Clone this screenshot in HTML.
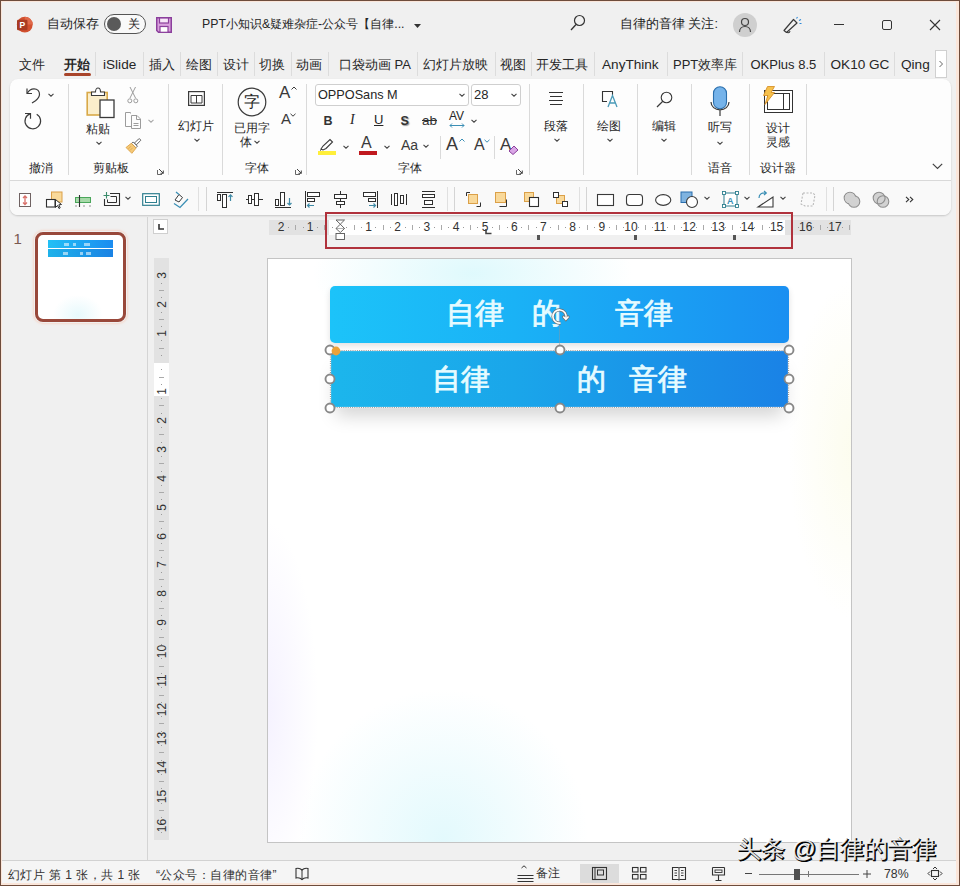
<!DOCTYPE html>
<html><head><meta charset="utf-8">
<style>
*{margin:0;padding:0;box-sizing:border-box}
html,body{width:960px;height:886px;overflow:hidden;background:#f0f0f0;font-family:"Liberation Sans",sans-serif;color:#262626}
.a{position:absolute;white-space:nowrap}
.t13{font-size:13px;line-height:16px}
.t12{font-size:12px;line-height:14px}
.sep{position:absolute;width:1px;background:#d6d6d6}
svg{position:absolute;overflow:visible}
</style></head><body>
<div id="title">
<svg style="left:15px;top:15px" width="19" height="19" viewBox="0 0 19 19"><circle cx="9.8" cy="9.6" r="7.9" fill="#d2502f"/><path d="M9.8 1.7A7.9 7.9 0 0 1 17.7 9.6H9.8Z" fill="#e0694a"/><rect x="2" y="4.8" width="10.5" height="10.5" rx="1.2" fill="#a93a22"/><text x="4.6" y="13.2" font-size="8.5" font-weight="bold" fill="#fff" font-family="Liberation Sans">P</text></svg>
<div class="a t12" style="left:47px;top:17px;font-size:12.5px">自动保存</div>
<div class="a" style="left:104px;top:14px;width:42px;height:20px;border:1.3px solid #555;border-radius:10px;background:#f9f9f9"></div>
<div class="a" style="left:107px;top:17px;width:14px;height:14px;border-radius:7px;background:#5a5a5a"></div>
<div class="a t12" style="left:128px;top:17px">关</div>
<svg style="left:156px;top:17px" width="17" height="17" viewBox="0 0 17 17"><path d="M0.75 0.75H15.25V15.25H2.5L0.75 13.5Z" fill="#d9a0dd" stroke="#8b3f9c" stroke-width="1.5"/><rect x="3.5" y="1" width="9" height="5" fill="#f7e6f8" stroke="#8b3f9c" stroke-width="1.2"/><rect x="4" y="9.5" width="8" height="5.8" fill="#fff" stroke="#8b3f9c" stroke-width="1.2"/></svg>
<div class="a t12" style="left:202px;top:17px;font-size:12.3px">PPT小知识&amp;疑难杂症-公众号【自律...</div>
<svg style="left:414px;top:24px" width="8" height="5"><path d="M0 0H7L3.5 4Z" fill="#333"/></svg>
<svg style="left:570px;top:14px" width="16" height="18" viewBox="0 0 16 18"><circle cx="9.5" cy="6.5" r="5" fill="none" stroke="#333" stroke-width="1.2"/><path d="M6 10.5L1 16" stroke="#333" stroke-width="1.3"/></svg>
<div class="a t12" style="left:620px;top:17px;font-size:12.5px">自律的音律 关注:</div>
<div class="a" style="left:733px;top:13px;width:24px;height:24px;border-radius:12px;background:#cfcfcf"></div>
<svg style="left:738px;top:17px" width="14" height="16" viewBox="0 0 14 16"><circle cx="7" cy="5" r="3.5" fill="none" stroke="#444" stroke-width="1.2"/><path d="M1.5 15c0-3.5 2.5-5.5 5.5-5.5s5.5 2 5.5 5.5" fill="none" stroke="#444" stroke-width="1.2"/></svg>
<svg style="left:782px;top:15px" width="20" height="19" viewBox="0 0 20 19"><path d="M2 15.5L11.5 4.5L15 8L4.5 17.5Z" fill="none" stroke="#3a3a3a" stroke-width="1.2" stroke-linejoin="round"/><path d="M5.5 16.5C5 18 7.5 18.5 8 16" fill="none" stroke="#3a3a3a" stroke-width="1.1"/><path d="M14.5 3.5L15.5 2M17 5.5L19 4.5M17.5 8.5H19.5" stroke="#2b88d8" stroke-width="1.1"/></svg>
<div class="a" style="left:834px;top:24px;width:10px;height:1px;background:#333"></div>
<div class="a" style="left:882px;top:20px;width:10px;height:10px;border:1px solid #333;border-radius:2px"></div>
<svg style="left:929px;top:19px" width="12" height="12"><path d="M1 1L11 11M11 1L1 11" stroke="#333" stroke-width="1.1"/></svg>
</div>

<div id="tabs">
<div class="a t13" style="left:19px;top:57px;">文件</div>
<div class="a t13" style="left:64px;top:57px;font-weight:bold;">开始</div>
<div class="a t13" style="left:103px;top:56.5px;font-size:13.6px">iSlide</div>
<div class="a t13" style="left:149px;top:57px;">插入</div>
<div class="a t13" style="left:186px;top:57px;">绘图</div>
<div class="a t13" style="left:222.5px;top:57px;">设计</div>
<div class="a t13" style="left:259px;top:57px;">切换</div>
<div class="a t13" style="left:296px;top:57px;">动画</div>
<div class="a t13" style="left:339px;top:57px;">口袋动画 PA</div>
<div class="a t13" style="left:423px;top:57px;">幻灯片放映</div>
<div class="a t13" style="left:500px;top:57px;">视图</div>
<div class="a t13" style="left:536px;top:57px;">开发工具</div>
<div class="a t13" style="left:602px;top:56.5px;font-size:13.6px">AnyThink</div>
<div class="a t13" style="left:673px;top:57px;">PPT效率库</div>
<div class="a t13" style="left:750.5px;top:57px;">OKPlus 8.5</div>
<div class="a t13" style="left:830.5px;top:56.5px;font-size:13.6px">OK10 GC</div>
<div class="a t13" style="left:901px;top:56.5px;font-size:13.6px">Qing</div>
<div class="sep" style="left:95px;top:52px;height:24px;background:#dcdcdc"></div>
<div class="sep" style="left:143px;top:52px;height:24px;background:#dcdcdc"></div>
<div class="sep" style="left:180px;top:52px;height:24px;background:#dcdcdc"></div>
<div class="sep" style="left:217px;top:52px;height:24px;background:#dcdcdc"></div>
<div class="sep" style="left:254px;top:52px;height:24px;background:#dcdcdc"></div>
<div class="sep" style="left:291px;top:52px;height:24px;background:#dcdcdc"></div>
<div class="sep" style="left:328px;top:52px;height:24px;background:#dcdcdc"></div>
<div class="sep" style="left:417px;top:52px;height:24px;background:#dcdcdc"></div>
<div class="sep" style="left:495px;top:52px;height:24px;background:#dcdcdc"></div>
<div class="sep" style="left:531px;top:52px;height:24px;background:#dcdcdc"></div>
<div class="sep" style="left:594px;top:52px;height:24px;background:#dcdcdc"></div>
<div class="sep" style="left:667px;top:52px;height:24px;background:#dcdcdc"></div>
<div class="sep" style="left:742px;top:52px;height:24px;background:#dcdcdc"></div>
<div class="sep" style="left:824px;top:52px;height:24px;background:#dcdcdc"></div>
<div class="sep" style="left:894px;top:52px;height:24px;background:#dcdcdc"></div>
<div class="a" style="left:64px;top:73px;width:27px;height:3px;border-radius:1.5px;background:#a8442a"></div>
<div class="a" style="left:935px;top:50px;width:12px;height:28px;background:#fff;border:1px solid #d0d0d0"></div>
<svg style="left:938px;top:60px" width="6" height="8"><path d="M1.5 1L4.5 4L1.5 7" fill="none" stroke="#666" stroke-width="1"/></svg>
</div>

<div class="a" style="left:10px;top:79px;width:941px;height:136px;background:#fdfdfd;border-radius:8px;box-shadow:0 1px 2px rgba(0,0,0,.18)"></div>
<div class="a" style="left:10px;top:181px;width:941px;height:34px;background:#f9f9f9;border-radius:0 0 8px 8px"></div>
<div class="a" style="left:10px;top:180px;width:941px;height:1px;background:#d9d9d9"></div>
<div class="sep" style="left:68px;top:84px;height:91px;background:#dadada"></div>
<div class="sep" style="left:168px;top:84px;height:91px;background:#dadada"></div>
<div class="sep" style="left:222px;top:84px;height:91px;background:#dadada"></div>
<div class="sep" style="left:306px;top:84px;height:91px;background:#dadada"></div>
<div class="sep" style="left:529px;top:84px;height:91px;background:#dadada"></div>
<div class="sep" style="left:583px;top:84px;height:91px;background:#dadada"></div>
<div class="sep" style="left:637px;top:84px;height:91px;background:#dadada"></div>
<div class="sep" style="left:691px;top:84px;height:91px;background:#dadada"></div>
<div class="sep" style="left:749px;top:84px;height:91px;background:#dadada"></div>
<div class="sep" style="left:806px;top:84px;height:91px;background:#dadada"></div>
<svg style="left:24px;top:86px" width="18" height="18" viewBox="0 0 18 18"><path d="M3 2.5V7.5H8" fill="none" stroke="#3a3a3a" stroke-width="1.2"/><path d="M3.3 7.2C5 4 7.5 2.8 10 2.8c3.5 0 5.5 2.6 5.5 5.5 0 3-2 4.8-4 6.5L8 17" fill="none" stroke="#3a3a3a" stroke-width="1.2"/></svg>
<svg style="left:48px;top:93px" width="6" height="4" viewBox="0 0 6 4"><path d="M0.5 0.8L3 3.2L5.5 0.8" fill="none" stroke="#444" stroke-width="1.1"/></svg>
<svg style="left:24px;top:111px" width="18" height="19" viewBox="0 0 18 19"><path d="M1 2.5H6.5V7.8" fill="none" stroke="#3a3a3a" stroke-width="1.2"/><path d="M12.7 3.25A7.8 7.8 0 1 1 6.4 2.6" fill="none" stroke="#3a3a3a" stroke-width="1.2"/></svg>
<div class="a" style="left:29px;top:161px;font-size:12px;line-height:14px;">撤消</div>
<svg style="left:86px;top:87px" width="30" height="32" viewBox="0 0 30 32"><rect x="1.2" y="5.5" width="20" height="22.5" fill="#fbeecb" stroke="#d9a948" stroke-width="1.6"/><path d="M5.5 8.5V5H9.5C9.5 2.5 10.8 1 12 1S14.5 2.5 14.5 5H18.5V8.5Z" fill="#fff" stroke="#3a3a3a" stroke-width="1.1"/><rect x="14" y="13" width="14" height="17.5" fill="#fff" stroke="#3a3a3a" stroke-width="1.3"/></svg>
<div class="a" style="left:86px;top:122px;font-size:12px;line-height:14px;">粘贴</div>
<svg style="left:96px;top:141px" width="6" height="4" viewBox="0 0 6 4"><path d="M0.5 0.8L3 3.2L5.5 0.8" fill="none" stroke="#444" stroke-width="1.1"/></svg>
<svg style="left:120px;top:84px" width="24" height="24" viewBox="0 0 24 24"><g fill="none" stroke="#9c9c9c" stroke-width="1"><path d="M10 3L15.5 14M15.5 3L10 14"/><circle cx="9.8" cy="16.8" r="2"/><circle cx="15.8" cy="16.8" r="2"/></g></svg>
<svg style="left:120px;top:108px" width="24" height="24" viewBox="0 0 24 24"><g fill="none" stroke="#9c9c9c" stroke-width="1"><path d="M10.5 5.5V4.5H5.5V18.5H11"/><path d="M11.5 7.5H17L20.5 11V20.5H11.5Z"/><path d="M16.5 7.5V11.5H20.5M13.5 15.5H18.5M13.5 17.5H18.5"/></g></svg>
<svg style="left:148px;top:119px" width="6" height="4" viewBox="0 0 6 4"><path d="M0.5 0.8L3 3.2L5.5 0.8" fill="none" stroke="#a8a8a8" stroke-width="1.1"/></svg>
<svg style="left:120px;top:134px" width="24" height="24" viewBox="0 0 24 24"><g transform="translate(13.5 11.5) scale(0.75) translate(-12 -12.5)"><g transform="rotate(45 13 12)"><rect x="11.3" y="1" width="3.4" height="9" rx="1" fill="#fff" stroke="#3a3a3a" stroke-width="1"/><rect x="9" y="10" width="8" height="3" fill="#fff" stroke="#3a3a3a" stroke-width="1"/><path d="M8.5 13H17.5L18.5 22H7.5Z" fill="#f5c978" stroke="#d99b3b" stroke-width="1"/><path d="M11 16V21M14 16V21" stroke="#d99b3b" stroke-width="0.8"/></g></g></svg>
<div class="a" style="left:93px;top:161px;font-size:12px;line-height:14px;">剪贴板</div>
<svg style="left:157px;top:167px" width="8" height="8" viewBox="0 0 8 8"><path d="M0.5 3V7.5H5" fill="none" stroke="#555" stroke-width="0.9"/><path d="M2 2L6.3 6.3M3.5 6.3H6.3V3.5" fill="none" stroke="#444" stroke-width="1"/></svg>
<svg style="left:188px;top:91px" width="17" height="15" viewBox="0 0 17 15"><rect x="0.6" y="0.6" width="15.8" height="13.8" fill="none" stroke="#3a3a3a" stroke-width="1.2"/><path d="M3 4.5H14M3 4.5V12H14V4.5M8.5 4.5V12" fill="none" stroke="#3a3a3a" stroke-width="1"/></svg>
<div class="a" style="left:178px;top:119px;font-size:12px;line-height:14px;">幻灯片</div>
<svg style="left:194px;top:138px" width="6" height="4" viewBox="0 0 6 4"><path d="M0.5 0.8L3 3.2L5.5 0.8" fill="none" stroke="#444" stroke-width="1.1"/></svg>
<svg style="left:237px;top:87px" width="30" height="30" viewBox="0 0 30 30"><circle cx="15" cy="15" r="13.8" fill="none" stroke="#3a3a3a" stroke-width="1.2"/></svg>
<div class="a" style="left:244px;top:94px;font-size:16px;line-height:18px;line-height:16px">字</div>
<div class="a" style="left:234px;top:121px;font-size:12px;line-height:14px;">已用字</div>
<div class="a" style="left:240px;top:135px;font-size:12px;line-height:14px;">体</div>
<svg style="left:254px;top:140px" width="6" height="4" viewBox="0 0 6 4"><path d="M0.5 0.8L3 3.2L5.5 0.8" fill="none" stroke="#444" stroke-width="1.1"/></svg>
<div class="a" style="left:279px;top:84px;font-size:17px;line-height:19px;line-height:18px;color:#3a3a3a">A</div>
<svg style="left:291px;top:86px" width="6" height="4" viewBox="0 0 6 4"><path d="M0.5 3.5L3 1L5.5 3.5" fill="none" stroke="#3a3a3a" stroke-width="1"/></svg>
<div class="a" style="left:281px;top:111px;font-size:15px;line-height:17px;line-height:16px;color:#3a3a3a">A</div>
<svg style="left:290px;top:113px" width="6" height="4" viewBox="0 0 6 4"><path d="M0.5 0.8L3 3.2L5.5 0.8" fill="none" stroke="#3a3a3a" stroke-width="1"/></svg>
<div class="a" style="left:245px;top:161px;font-size:12px;line-height:14px;">字体</div>
<svg style="left:295px;top:167px" width="8" height="8" viewBox="0 0 8 8"><path d="M0.5 3V7.5H5" fill="none" stroke="#555" stroke-width="0.9"/><path d="M2 2L6.3 6.3M3.5 6.3H6.3V3.5" fill="none" stroke="#444" stroke-width="1"/></svg>
<div class="a" style="left:315px;top:84px;width:154px;height:22px;border:1px solid #cfcfcf;border-radius:3px;background:#fff"></div>
<div class="a" style="left:318px;top:88px;font-size:13px;line-height:15px;line-height:14px;font-size:12.7px">OPPOSans M</div>
<svg style="left:459px;top:93px" width="6" height="4" viewBox="0 0 6 4"><path d="M0.5 0.8L3 3.2L5.5 0.8" fill="none" stroke="#444" stroke-width="1.1"/></svg>
<div class="a" style="left:471px;top:84px;width:50px;height:22px;border:1px solid #cfcfcf;border-radius:3px;background:#fff"></div>
<div class="a" style="left:474px;top:88px;font-size:13px;line-height:15px;line-height:14px">28</div>
<svg style="left:511px;top:93px" width="6" height="4" viewBox="0 0 6 4"><path d="M0.5 0.8L3 3.2L5.5 0.8" fill="none" stroke="#444" stroke-width="1.1"/></svg>
<div class="a" style="left:323.5px;top:113px;font-size:12.5px;line-height:14.5px;font-weight:bold;line-height:16px;color:#333">B</div>
<div class="a" style="left:350px;top:112px;font-size:14px;line-height:16px;font-family:Liberation Serif;font-style:italic;line-height:16px">I</div>
<div class="a" style="left:374px;top:112px;font-size:13px;line-height:15px;line-height:16px;text-decoration:underline">U</div>
<div class="a" style="left:400.5px;top:113px;font-size:12.5px;line-height:14.5px;font-weight:bold;line-height:16px;color:#333;text-shadow:1px 1px 1px #999">S</div>
<div class="a" style="left:422px;top:113px;font-size:13.5px;line-height:15.5px;line-height:16px;color:#333;text-decoration:line-through">ab</div>
<div class="a" style="left:449px;top:110px;font-size:12px;line-height:14px;line-height:13px">AV</div>
<svg style="left:449px;top:123px" width="16" height="5" viewBox="0 0 16 5"><path d="M1 2.5H15M3 0.5L1 2.5L3 4.5M13 0.5L15 2.5L13 4.5" fill="none" stroke="#3b8fb5" stroke-width="1"/></svg>
<svg style="left:471px;top:119px" width="6" height="4" viewBox="0 0 6 4"><path d="M0.5 0.8L3 3.2L5.5 0.8" fill="none" stroke="#444" stroke-width="1.1"/></svg>
<svg style="left:318px;top:138px" width="18" height="17" viewBox="0 0 18 17"><path d="M3 11L5 8L12 1.5L14.5 4L8 10.5L5 12Z" fill="#fff" stroke="#3a3a3a" stroke-width="1.1"/><path d="M2 12.5L4 11" stroke="#3a3a3a" stroke-width="1"/><rect x="0" y="13" width="18" height="4" fill="#ffef3a"/></svg>
<svg style="left:343px;top:145px" width="6" height="4" viewBox="0 0 6 4"><path d="M0.5 0.8L3 3.2L5.5 0.8" fill="none" stroke="#444" stroke-width="1.1"/></svg>
<div class="a" style="left:361px;top:135px;font-size:16px;line-height:18px;line-height:16px;color:#3a3a3a">A</div>
<div class="a" style="left:359px;top:151px;width:18px;height:4px;background:#c0191f"></div>
<svg style="left:384px;top:145px" width="6" height="4" viewBox="0 0 6 4"><path d="M0.5 0.8L3 3.2L5.5 0.8" fill="none" stroke="#444" stroke-width="1.1"/></svg>
<div class="a" style="left:401px;top:137px;font-size:14px;line-height:16px;line-height:16px;color:#3a3a3a">Aa</div>
<svg style="left:423px;top:144px" width="6" height="4" viewBox="0 0 6 4"><path d="M0.5 0.8L3 3.2L5.5 0.8" fill="none" stroke="#444" stroke-width="1.1"/></svg>
<div class="sep" style="left:440px;top:136px;height:23px;background:#dadada"></div>
<div class="a" style="left:446px;top:135px;font-size:18px;line-height:20px;line-height:18px;color:#3a3a3a">A</div>
<svg style="left:459px;top:138px" width="6" height="4" viewBox="0 0 6 4"><path d="M0.5 3.5L3 1L5.5 3.5" fill="none" stroke="#3b8fb5" stroke-width="1"/></svg>
<div class="a" style="left:474px;top:137px;font-size:16px;line-height:18px;line-height:16px;color:#3a3a3a">A</div>
<svg style="left:484px;top:139px" width="6" height="4" viewBox="0 0 6 4"><path d="M0.5 0.8L3 3.2L5.5 0.8" fill="none" stroke="#3b8fb5" stroke-width="1"/></svg>
<div class="sep" style="left:494px;top:136px;height:23px;background:#dadada"></div>
<div class="a" style="left:500px;top:136px;font-size:17px;line-height:19px;line-height:17px;color:#3a3a3a">A</div>
<svg style="left:508px;top:145px" width="11" height="10" viewBox="0 0 11 10"><path d="M1 6L6 1L10 5L5 9.5Z" fill="#d9a6e6" stroke="#8b3f9c" stroke-width="1"/></svg>
<div class="a" style="left:398px;top:161px;font-size:12px;line-height:14px;">字体</div>
<svg style="left:516px;top:167px" width="8" height="8" viewBox="0 0 8 8"><path d="M0.5 3V7.5H5" fill="none" stroke="#555" stroke-width="0.9"/><path d="M2 2L6.3 6.3M3.5 6.3H6.3V3.5" fill="none" stroke="#444" stroke-width="1"/></svg>
<svg style="left:548px;top:91px" width="16" height="15" viewBox="0 0 16 15"><path d="M1 1.5H15M2 5.5H14M1 9.5H15M2 13.5H14" stroke="#333" stroke-width="1.1"/></svg>
<div class="a" style="left:544px;top:119px;font-size:12px;line-height:14px;">段落</div>
<svg style="left:554px;top:138px" width="6" height="4" viewBox="0 0 6 4"><path d="M0.5 0.8L3 3.2L5.5 0.8" fill="none" stroke="#444" stroke-width="1.1"/></svg>
<svg style="left:601px;top:90px" width="19" height="18" viewBox="0 0 19 18"><path d="M11.5 5V1.5H1.5V11.5H6" fill="none" stroke="#333" stroke-width="1.1"/><path d="M7 17L11.5 5.5L16 17M8.6 13H14.4" fill="none" stroke="#4a9ab8" stroke-width="1.3"/></svg>
<div class="a" style="left:597px;top:119px;font-size:12px;line-height:14px;">绘图</div>
<svg style="left:607px;top:138px" width="6" height="4" viewBox="0 0 6 4"><path d="M0.5 0.8L3 3.2L5.5 0.8" fill="none" stroke="#444" stroke-width="1.1"/></svg>
<svg style="left:656px;top:91px" width="17" height="17" viewBox="0 0 17 17"><circle cx="10.5" cy="6.5" r="5.3" fill="none" stroke="#3a3a3a" stroke-width="1.1"/><path d="M6.8 10.3L1 16" stroke="#3a3a3a" stroke-width="1.2"/></svg>
<div class="a" style="left:652px;top:119px;font-size:12px;line-height:14px;">编辑</div>
<svg style="left:661px;top:138px" width="6" height="4" viewBox="0 0 6 4"><path d="M0.5 0.8L3 3.2L5.5 0.8" fill="none" stroke="#444" stroke-width="1.1"/></svg>
<svg style="left:710px;top:86px" width="20" height="31" viewBox="0 0 20 31"><rect x="3.5" y="0.7" width="13" height="22" rx="6.5" fill="#75b3ea" stroke="#2b6fad" stroke-width="1.1"/><path d="M1 16C1 20.5 5 23.8 10 23.8S19 20.5 19 16M10 24V30" fill="none" stroke="#3a3a3a" stroke-width="1.2"/></svg>
<div class="a" style="left:708px;top:120px;font-size:12px;line-height:14px;">听写</div>
<svg style="left:717px;top:141px" width="6" height="4" viewBox="0 0 6 4"><path d="M0.5 0.8L3 3.2L5.5 0.8" fill="none" stroke="#444" stroke-width="1.1"/></svg>
<div class="a" style="left:708px;top:161px;font-size:12px;line-height:14px;">语音</div>
<svg style="left:761px;top:86px" width="33" height="28" viewBox="0 0 33 28"><rect x="3.5" y="4.5" width="28" height="22" fill="#fff" stroke="#333" stroke-width="1"/><rect x="6.5" y="7.5" width="22" height="16" fill="none" stroke="#333" stroke-width="1"/><path d="M22.5 7.5V23.5" stroke="#333" stroke-width="1"/><path d="M6.5 0.5H13.5L10 6.5H13.5L4 18.5L6.8 9.5H2.5Z" fill="#f6c14c" stroke="#d8922a" stroke-width="0.9"/></svg>
<div class="a" style="left:766px;top:121px;font-size:12px;line-height:14px;">设计</div>
<div class="a" style="left:766px;top:135px;font-size:12px;line-height:14px;">灵感</div>
<div class="a" style="left:760px;top:161px;font-size:12px;line-height:14px;">设计器</div>
<svg style="left:932px;top:163px" width="11" height="7" viewBox="0 0 11 7"><path d="M0.8 0.8L5.5 5.5L10.2 0.8" fill="none" stroke="#444" stroke-width="1.2"/></svg>
<svg style="left:18px;top:192px" width="14" height="16" viewBox="0 0 14 16"><rect x="1.5" y="1.5" width="11" height="13" fill="#fff" stroke="#6f6262" stroke-width="1"/><path d="M7 4V12.5M5 6L7 4L9 6M5 10.5L7 12.5L9 10.5" fill="none" stroke="#d9706a" stroke-width="1.3"/></svg>
<svg style="left:45px;top:191px" width="18" height="18" viewBox="0 0 18 18"><rect x="6.5" y="1" width="10.5" height="10" fill="#f9d99a" stroke="#dba048" stroke-width="1"/><rect x="1.5" y="8.5" width="8.5" height="7.5" fill="#fff" stroke="#2f2f2f" stroke-width="1.1"/><path d="M10.5 8.5V16.5L12.5 14.5L14 17.5L15.2 16.8L13.8 13.8L16.5 13.5Z" fill="#fff" stroke="#2f2f2f" stroke-width="1"/></svg>
<svg style="left:73px;top:193px" width="20" height="16" viewBox="0 0 20 16"><rect x="2.5" y="4.5" width="15" height="5" fill="#a6d9a8" stroke="#4aa65a" stroke-width="1"/><path d="M6.5 2V14" stroke="#2f2f2f" stroke-width="1.1"/><path d="M3 12.5V13.5M11 12.5V13.5M17 12.5V13.5" stroke="#2f2f2f" stroke-width="1"/></svg>
<svg style="left:103px;top:192px" width="19" height="15" viewBox="0 0 19 15"><path d="M7 1.5H16.5V13.5H1.5V7" fill="none" stroke="#2f2f2f" stroke-width="1.1"/><path d="M7.5 4.5H13.5V10.5H4.5V7.5" fill="none" stroke="#2f2f2f" stroke-width="1"/><path d="M3.5 0V6.5M0.5 3.5H6.5" stroke="#3a8a6a" stroke-width="1.1"/></svg>
<svg style="left:125px;top:196px" width="6" height="4" viewBox="0 0 6 4"><path d="M0.5 0.8L3 3.2L5.5 0.8" fill="none" stroke="#444" stroke-width="1.1"/></svg>
<svg style="left:142px;top:193px" width="18" height="13" viewBox="0 0 18 13"><rect x="0.7" y="0.7" width="16.6" height="11.6" fill="#fff" stroke="#2f7f8f" stroke-width="1.2"/><rect x="3.5" y="3.5" width="11" height="6" fill="#fff" stroke="#2f7f8f" stroke-width="1"/></svg>
<svg style="left:172px;top:191px" width="17" height="17" viewBox="0 0 17 17"><path d="M3 9L7 3.5L10.5 6.5L7 11Z" fill="#fff" stroke="#3a3a3a" stroke-width="1"/><path d="M4 1L7 3.5M2 12.5L8 16.5L16 8" fill="none" stroke="#3b8fb5" stroke-width="1.3"/></svg>
<div class="sep" style="left:198px;top:187px;height:24px;background:#e0e0e0"></div>
<div class="sep" style="left:206px;top:187px;height:24px;background:#d4d4d4"></div>
<svg style="left:216px;top:191px" width="18" height="18" viewBox="0 0 18 18"><path d="M1 1.5H17" stroke="#2f2f2f" stroke-width="1"/><rect x="1.5" y="3.5" width="3" height="6" fill="#fff" stroke="#2f2f2f" stroke-width="1"/><rect x="6.5" y="3.5" width="4" height="13" fill="#fff" stroke="#2f2f2f" stroke-width="1"/><path d="M14.5 10V3.8M12.5 5.8L14.5 3.8L16.5 5.8" fill="none" stroke="#3f8aa6" stroke-width="1.2"/></svg>
<svg style="left:246px;top:192px" width="17" height="15" viewBox="0 0 17 15"><path d="M0 7.5H17" stroke="#2f2f2f" stroke-width="1"/><rect x="2.5" y="3.5" width="3" height="8" fill="#fff" stroke="#2f2f2f" stroke-width="1"/><rect x="8.5" y="1.5" width="4" height="12" fill="#fff" stroke="#2f2f2f" stroke-width="1"/></svg>
<svg style="left:275px;top:191px" width="18" height="18" viewBox="0 0 18 18"><path d="M0 16.5H16" stroke="#2f2f2f" stroke-width="1"/><rect x="0.5" y="8.5" width="3" height="6" fill="#fff" stroke="#2f2f2f" stroke-width="1"/><rect x="5.5" y="1.5" width="4" height="13" fill="#fff" stroke="#2f2f2f" stroke-width="1"/><path d="M14.5 7V14M12.5 12L14.5 14L16.5 12" fill="none" stroke="#3f8aa6" stroke-width="1.2"/></svg>
<svg style="left:304px;top:191px" width="17" height="18" viewBox="0 0 17 18"><path d="M1.5 0V17" stroke="#2f2f2f" stroke-width="1"/><rect x="3.5" y="1.5" width="12" height="4" fill="#fff" stroke="#2f2f2f" stroke-width="1"/><rect x="3.5" y="7.5" width="7" height="3" fill="#fff" stroke="#2f2f2f" stroke-width="1"/><path d="M10 14.5H3.5M5.5 12.5L3.5 14.5L5.5 16.5" fill="none" stroke="#3f8aa6" stroke-width="1.2"/></svg>
<svg style="left:333px;top:191px" width="15" height="18" viewBox="0 0 15 18"><path d="M7.5 0V17" stroke="#2f2f2f" stroke-width="1"/><rect x="1.5" y="3.5" width="12" height="4" fill="#fff" stroke="#2f2f2f" stroke-width="1"/><rect x="3.5" y="10.5" width="8" height="3" fill="#fff" stroke="#2f2f2f" stroke-width="1"/></svg>
<svg style="left:362px;top:191px" width="17" height="18" viewBox="0 0 17 18"><path d="M15.5 0V17" stroke="#2f2f2f" stroke-width="1"/><rect x="1.5" y="1.5" width="12" height="4" fill="#fff" stroke="#2f2f2f" stroke-width="1"/><rect x="6.5" y="7.5" width="7" height="3" fill="#fff" stroke="#2f2f2f" stroke-width="1"/><path d="M7 14.5H13.5M11.5 12.5L13.5 14.5L11.5 16.5" fill="none" stroke="#3f8aa6" stroke-width="1.2"/></svg>
<svg style="left:391px;top:192px" width="17" height="15" viewBox="0 0 17 15"><path d="M0.5 2V13M15.5 2V13" stroke="#2f2f2f" stroke-width="1"/><rect x="3.5" y="1.5" width="3" height="12" fill="#fff" stroke="#2f2f2f" stroke-width="1"/><rect x="9.5" y="3.5" width="3" height="8" fill="#fff" stroke="#2f2f2f" stroke-width="1"/></svg>
<svg style="left:421px;top:191px" width="15" height="18" viewBox="0 0 15 18"><path d="M1 0.5H14M1 16.5H14" stroke="#2f2f2f" stroke-width="1"/><rect x="1.5" y="3.5" width="12" height="3" fill="#fff" stroke="#2f2f2f" stroke-width="1"/><rect x="3.5" y="9.5" width="8" height="4" fill="#fff" stroke="#2f2f2f" stroke-width="1"/></svg>
<div class="sep" style="left:447px;top:187px;height:24px;background:#e0e0e0"></div>
<div class="sep" style="left:454px;top:187px;height:24px;background:#d4d4d4"></div>
<svg style="left:465px;top:191px" width="17" height="17" viewBox="0 0 17 17"><path d="M1.5 5V1.5H5M11.5 15.5H15.5V11.5" fill="none" stroke="#2f2f2f" stroke-width="1"/><rect x="3.5" y="3.5" width="9" height="9" fill="#f9d99a" stroke="#dba048" stroke-width="1"/></svg>
<svg style="left:494px;top:191px" width="17" height="17" viewBox="0 0 17 17"><path d="M12.5 8.5V15.5H5.5" fill="none" stroke="#2f2f2f" stroke-width="1"/><rect x="1.5" y="1.5" width="10" height="10" fill="#f9d99a" stroke="#dba048" stroke-width="1"/></svg>
<svg style="left:523px;top:191px" width="17" height="17" viewBox="0 0 17 17"><rect x="1.5" y="1.5" width="9" height="9" fill="#f9d99a" stroke="#dba048" stroke-width="1"/><rect x="6.5" y="6.5" width="9" height="9" fill="#fff" stroke="#2f2f2f" stroke-width="1.1"/></svg>
<svg style="left:552px;top:191px" width="17" height="17" viewBox="0 0 17 17"><rect x="4.5" y="4.5" width="8" height="8" fill="#f9d99a" stroke="#dba048" stroke-width="1"/><rect x="1.5" y="1.5" width="5" height="5" fill="#fff" stroke="#2f2f2f" stroke-width="1"/><rect x="10.5" y="10.5" width="5" height="5" fill="#fff" stroke="#2f2f2f" stroke-width="1"/></svg>
<div class="sep" style="left:579px;top:187px;height:24px;background:#e0e0e0"></div>
<div class="sep" style="left:586px;top:187px;height:24px;background:#d4d4d4"></div>
<svg style="left:597px;top:194px" width="17" height="13" viewBox="0 0 17 13"><rect x="0.5" y="0.5" width="16" height="11" fill="#fff" stroke="#3a3a3a" stroke-width="1.1"/></svg>
<svg style="left:626px;top:194px" width="17" height="13" viewBox="0 0 17 13"><rect x="0.5" y="0.5" width="16" height="11" rx="3" fill="#fff" stroke="#3a3a3a" stroke-width="1.1"/></svg>
<svg style="left:655px;top:194px" width="17" height="12" viewBox="0 0 17 12"><ellipse cx="8.2" cy="6" rx="7.6" ry="5.4" fill="#fff" stroke="#3a3a3a" stroke-width="1.1"/></svg>
<svg style="left:680px;top:191px" width="19" height="17" viewBox="0 0 19 17"><rect x="1" y="1" width="11" height="10.5" fill="#7fb3e0" stroke="#2b6fad" stroke-width="1"/><circle cx="12" cy="11" r="5.5" fill="#fff" stroke="#3a3a3a" stroke-width="1.1"/></svg>
<svg style="left:704px;top:196px" width="6" height="4" viewBox="0 0 6 4"><path d="M0.5 0.8L3 3.2L5.5 0.8" fill="none" stroke="#444" stroke-width="1.1"/></svg>
<svg style="left:722px;top:191px" width="17" height="17" viewBox="0 0 17 17"><rect x="2" y="2" width="13" height="13" fill="#fff" stroke="#2f7f8f" stroke-width="1"/><rect x="0.5" y="0.5" width="3" height="3" fill="#fff" stroke="#2f7f8f" stroke-width="0.9"/><rect x="13.5" y="0.5" width="3" height="3" fill="#fff" stroke="#2f7f8f" stroke-width="0.9"/><rect x="0.5" y="13.5" width="3" height="3" fill="#fff" stroke="#2f7f8f" stroke-width="0.9"/><rect x="13.5" y="13.5" width="3" height="3" fill="#fff" stroke="#2f7f8f" stroke-width="0.9"/><text x="5" y="12.5" font-size="9" font-weight="bold" fill="#3b8fb5" font-family="Liberation Sans">A</text></svg>
<svg style="left:744px;top:196px" width="6" height="4" viewBox="0 0 6 4"><path d="M0.5 0.8L3 3.2L5.5 0.8" fill="none" stroke="#444" stroke-width="1.1"/></svg>
<svg style="left:757px;top:190px" width="17" height="18" viewBox="0 0 17 18"><path d="M1 17L16 7V17Z" fill="#fff" stroke="#3a3a3a" stroke-width="1.1"/><path d="M2 8C2 4 5 2.5 9 3M7 1L9.3 3L7 5" fill="none" stroke="#3b8fb5" stroke-width="1.2"/></svg>
<svg style="left:780px;top:196px" width="6" height="4" viewBox="0 0 6 4"><path d="M0.5 0.8L3 3.2L5.5 0.8" fill="none" stroke="#444" stroke-width="1.1"/></svg>
<svg style="left:800px;top:192px" width="16" height="15" viewBox="0 0 16 15"><path d="M3 1H13L15 3L13 14H5L1 12Z" fill="none" stroke="#b8b8b8" stroke-width="1.1" stroke-dasharray="2 1.5"/></svg>
<div class="sep" style="left:826px;top:187px;height:24px;background:#e0e0e0"></div>
<div class="sep" style="left:833px;top:187px;height:24px;background:#d4d4d4"></div>
<svg style="left:843px;top:191px" width="18" height="18" viewBox="0 0 18 18"><circle cx="7" cy="7" r="5.8" fill="#d2d2d2" stroke="#8f8f8f" stroke-width="1.1"/><circle cx="11" cy="10.5" r="5.8" fill="#d2d2d2" stroke="#8f8f8f" stroke-width="1.1"/><circle cx="7" cy="7" r="5.2" fill="#d2d2d2"/></svg>
<svg style="left:872px;top:191px" width="18" height="18" viewBox="0 0 18 18"><circle cx="7" cy="7" r="5.8" fill="#d2d2d2" stroke="#8f8f8f" stroke-width="1.1"/><circle cx="11" cy="10.5" r="5.8" fill="#d2d2d2" stroke="#8f8f8f" stroke-width="1.1"/><path d="M12.6 4.9A5.8 5.8 0 0 1 5.2 12.5" fill="none" stroke="#8f8f8f" stroke-width="1.1"/></svg>
<svg style="left:905px;top:196px" width="9" height="7" viewBox="0 0 9 7"><path d="M1 0.8L3.8 3.5L1 6.2M5 0.8L7.8 3.5L5 6.2" fill="none" stroke="#333" stroke-width="1.1"/></svg>
<div class="a" style="left:147px;top:217px;width:1px;height:644px;background:#d4d4d4"></div>
<div class="a" style="left:13.5px;top:230px;font-size:15px;line-height:17px;color:#7a5a50">1</div>
<div class="a" style="left:34px;top:231px;width:93px;height:92px;border-radius:9px;box-shadow:0 0 2px 1px rgba(250,200,180,.6)"></div>
<div class="a" style="left:35px;top:232px;width:91px;height:90px;border:3px solid #99483a;border-radius:8px;background:#fff;overflow:hidden"><div class="a" style="left:15px;top:60px;width:50px;height:40px;border-radius:50%;background:radial-gradient(closest-side,rgba(215,245,250,.6),rgba(255,255,255,0))"></div><div class="a" style="left:10px;top:5px;width:65px;height:8px;background:linear-gradient(90deg,#22c0f5,#1b8cf0)"></div><div class="a" style="left:10px;top:14px;width:65px;height:8px;background:linear-gradient(90deg,#1eb2ea,#1a82e4)"></div><div class="a" style="left:26px;top:7.5px;width:5px;height:3px;background:rgba(255,255,255,.55)"></div><div class="a" style="left:35px;top:7.5px;width:3px;height:3px;background:rgba(255,255,255,.55)"></div><div class="a" style="left:46px;top:7.5px;width:6px;height:3px;background:rgba(255,255,255,.55)"></div><div class="a" style="left:25px;top:16.5px;width:5px;height:3px;background:rgba(255,255,255,.55)"></div><div class="a" style="left:42px;top:16.5px;width:3px;height:3px;background:rgba(255,255,255,.55)"></div><div class="a" style="left:48px;top:16.5px;width:5px;height:3px;background:rgba(255,255,255,.55)"></div></div>
<div class="a" style="left:153px;top:219px;width:15px;height:15px;background:#fff;border:1px solid #cfcfcf"></div>
<svg style="left:158px;top:224px" width="6" height="6" viewBox="0 0 6 6"><path d="M1 0V5H6" fill="none" stroke="#333" stroke-width="1.6"/></svg>
<div class="a" style="left:269px;top:220px;width:582px;height:15px;background:#e2e2e2"></div>
<div class="a" style="left:329px;top:220px;width:456px;height:15px;background:#fff"></div>
<div class="a" style="left:271.1px;top:221px;width:20px;text-align:center;font-size:12px;line-height:13px;color:#333">2</div><div class="a" style="left:287.9px;top:227px;width:1px;height:1px;background:#9a9a9a"></div><div class="a" style="left:295.2px;top:225px;width:1px;height:5px;background:#aaa"></div><div class="a" style="left:302.5px;top:227px;width:1px;height:1px;background:#9a9a9a"></div><div class="a" style="left:300.2px;top:221px;width:20px;text-align:center;font-size:12px;line-height:13px;color:#333">1</div><div class="a" style="left:317.0px;top:227px;width:1px;height:1px;background:#9a9a9a"></div><div class="a" style="left:324.3px;top:225px;width:1px;height:5px;background:#aaa"></div><div class="a" style="left:331.6px;top:227px;width:1px;height:1px;background:#9a9a9a"></div><div class="a" style="left:346.2px;top:227px;width:1px;height:1px;background:#9a9a9a"></div><div class="a" style="left:353.5px;top:225px;width:1px;height:5px;background:#aaa"></div><div class="a" style="left:360.8px;top:227px;width:1px;height:1px;background:#9a9a9a"></div><div class="a" style="left:358.5px;top:221px;width:20px;text-align:center;font-size:12px;line-height:13px;color:#333">1</div><div class="a" style="left:375.3px;top:227px;width:1px;height:1px;background:#9a9a9a"></div><div class="a" style="left:382.6px;top:225px;width:1px;height:5px;background:#aaa"></div><div class="a" style="left:389.9px;top:227px;width:1px;height:1px;background:#9a9a9a"></div><div class="a" style="left:387.7px;top:221px;width:20px;text-align:center;font-size:12px;line-height:13px;color:#333">2</div><div class="a" style="left:404.5px;top:227px;width:1px;height:1px;background:#9a9a9a"></div><div class="a" style="left:411.8px;top:225px;width:1px;height:5px;background:#aaa"></div><div class="a" style="left:419.1px;top:227px;width:1px;height:1px;background:#9a9a9a"></div><div class="a" style="left:416.8px;top:221px;width:20px;text-align:center;font-size:12px;line-height:13px;color:#333">3</div><div class="a" style="left:433.6px;top:227px;width:1px;height:1px;background:#9a9a9a"></div><div class="a" style="left:440.9px;top:225px;width:1px;height:5px;background:#aaa"></div><div class="a" style="left:448.2px;top:227px;width:1px;height:1px;background:#9a9a9a"></div><div class="a" style="left:446.0px;top:221px;width:20px;text-align:center;font-size:12px;line-height:13px;color:#333">4</div><div class="a" style="left:462.8px;top:227px;width:1px;height:1px;background:#9a9a9a"></div><div class="a" style="left:470.1px;top:225px;width:1px;height:5px;background:#aaa"></div><div class="a" style="left:477.4px;top:227px;width:1px;height:1px;background:#9a9a9a"></div><div class="a" style="left:475.1px;top:221px;width:20px;text-align:center;font-size:12px;line-height:13px;color:#333">5</div><div class="a" style="left:491.9px;top:227px;width:1px;height:1px;background:#9a9a9a"></div><div class="a" style="left:499.2px;top:225px;width:1px;height:5px;background:#aaa"></div><div class="a" style="left:506.5px;top:227px;width:1px;height:1px;background:#9a9a9a"></div><div class="a" style="left:504.3px;top:221px;width:20px;text-align:center;font-size:12px;line-height:13px;color:#333">6</div><div class="a" style="left:521.1px;top:227px;width:1px;height:1px;background:#9a9a9a"></div><div class="a" style="left:528.4px;top:225px;width:1px;height:5px;background:#aaa"></div><div class="a" style="left:535.7px;top:227px;width:1px;height:1px;background:#9a9a9a"></div><div class="a" style="left:533.4px;top:221px;width:20px;text-align:center;font-size:12px;line-height:13px;color:#333">7</div><div class="a" style="left:550.2px;top:227px;width:1px;height:1px;background:#9a9a9a"></div><div class="a" style="left:557.5px;top:225px;width:1px;height:5px;background:#aaa"></div><div class="a" style="left:564.8px;top:227px;width:1px;height:1px;background:#9a9a9a"></div><div class="a" style="left:562.6px;top:221px;width:20px;text-align:center;font-size:12px;line-height:13px;color:#333">8</div><div class="a" style="left:579.4px;top:227px;width:1px;height:1px;background:#9a9a9a"></div><div class="a" style="left:586.7px;top:225px;width:1px;height:5px;background:#aaa"></div><div class="a" style="left:594.0px;top:227px;width:1px;height:1px;background:#9a9a9a"></div><div class="a" style="left:591.8px;top:221px;width:20px;text-align:center;font-size:12px;line-height:13px;color:#333">9</div><div class="a" style="left:608.5px;top:227px;width:1px;height:1px;background:#9a9a9a"></div><div class="a" style="left:615.8px;top:225px;width:1px;height:5px;background:#aaa"></div><div class="a" style="left:623.1px;top:227px;width:1px;height:1px;background:#9a9a9a"></div><div class="a" style="left:620.9px;top:221px;width:20px;text-align:center;font-size:12px;line-height:13px;color:#333">10</div><div class="a" style="left:637.7px;top:227px;width:1px;height:1px;background:#9a9a9a"></div><div class="a" style="left:645.0px;top:225px;width:1px;height:5px;background:#aaa"></div><div class="a" style="left:652.3px;top:227px;width:1px;height:1px;background:#9a9a9a"></div><div class="a" style="left:650.0px;top:221px;width:20px;text-align:center;font-size:12px;line-height:13px;color:#333">11</div><div class="a" style="left:666.8px;top:227px;width:1px;height:1px;background:#9a9a9a"></div><div class="a" style="left:674.1px;top:225px;width:1px;height:5px;background:#aaa"></div><div class="a" style="left:681.4px;top:227px;width:1px;height:1px;background:#9a9a9a"></div><div class="a" style="left:679.2px;top:221px;width:20px;text-align:center;font-size:12px;line-height:13px;color:#333">12</div><div class="a" style="left:696.0px;top:227px;width:1px;height:1px;background:#9a9a9a"></div><div class="a" style="left:703.3px;top:225px;width:1px;height:5px;background:#aaa"></div><div class="a" style="left:710.6px;top:227px;width:1px;height:1px;background:#9a9a9a"></div><div class="a" style="left:708.3px;top:221px;width:20px;text-align:center;font-size:12px;line-height:13px;color:#333">13</div><div class="a" style="left:725.1px;top:227px;width:1px;height:1px;background:#9a9a9a"></div><div class="a" style="left:732.4px;top:225px;width:1px;height:5px;background:#aaa"></div><div class="a" style="left:739.7px;top:227px;width:1px;height:1px;background:#9a9a9a"></div><div class="a" style="left:737.5px;top:221px;width:20px;text-align:center;font-size:12px;line-height:13px;color:#333">14</div><div class="a" style="left:754.3px;top:227px;width:1px;height:1px;background:#9a9a9a"></div><div class="a" style="left:761.6px;top:225px;width:1px;height:5px;background:#aaa"></div><div class="a" style="left:768.9px;top:227px;width:1px;height:1px;background:#9a9a9a"></div><div class="a" style="left:766.6px;top:221px;width:20px;text-align:center;font-size:12px;line-height:13px;color:#333">15</div><div class="a" style="left:783.4px;top:227px;width:1px;height:1px;background:#9a9a9a"></div><div class="a" style="left:790.7px;top:225px;width:1px;height:5px;background:#aaa"></div><div class="a" style="left:798.0px;top:227px;width:1px;height:1px;background:#9a9a9a"></div><div class="a" style="left:795.8px;top:221px;width:20px;text-align:center;font-size:12px;line-height:13px;color:#333">16</div><div class="a" style="left:812.6px;top:227px;width:1px;height:1px;background:#9a9a9a"></div><div class="a" style="left:819.9px;top:225px;width:1px;height:5px;background:#aaa"></div><div class="a" style="left:827.2px;top:227px;width:1px;height:1px;background:#9a9a9a"></div><div class="a" style="left:824.9px;top:221px;width:20px;text-align:center;font-size:12px;line-height:13px;color:#333">17</div><div class="a" style="left:841.7px;top:227px;width:1px;height:1px;background:#9a9a9a"></div><div class="a" style="left:849.0px;top:225px;width:1px;height:5px;background:#aaa"></div>
<svg style="left:335px;top:219px" width="11" height="22" viewBox="0 0 11 22"><path d="M1 1H9.5L5.3 5.2L9.5 9.5H1L5.3 5.2Z" fill="#fff" stroke="#555" stroke-width="0.9"/><path d="M1 9.5L5.3 13.5L9.5 9.5" fill="#fff" stroke="#555" stroke-width="0.9"/><rect x="1" y="14.5" width="8.5" height="6" fill="#fff" stroke="#555" stroke-width="0.9"/></svg>
<svg style="left:485px;top:229px" width="7" height="6" viewBox="0 0 7 6"><path d="M1 0V4.5H6.5" fill="none" stroke="#444" stroke-width="1.6"/></svg>
<div class="a" style="left:536.5px;top:235px;width:3px;height:5px;background:#555"></div>
<div class="a" style="left:634px;top:235px;width:3px;height:5px;background:#555"></div>
<div class="a" style="left:733px;top:235px;width:3px;height:5px;background:#555"></div>
<div class="a" style="left:154px;top:258px;width:15px;height:582px;background:#e2e2e2"></div>
<div class="a" style="left:154px;top:363px;width:15px;height:33px;background:#fff"></div>
<div class="a" style="left:151.5px;top:269.4px;width:20px;height:13px;text-align:center;font-size:12px;line-height:13px;color:#333;transform:rotate(-90deg)">3</div><div class="a" style="left:161px;top:282.6px;width:1px;height:1px;background:#9a9a9a"></div><div class="a" style="left:159px;top:289.9px;width:5px;height:1px;background:#aaa"></div><div class="a" style="left:161px;top:297.1px;width:1px;height:1px;background:#9a9a9a"></div><div class="a" style="left:151.5px;top:298.3px;width:20px;height:13px;text-align:center;font-size:12px;line-height:13px;color:#333;transform:rotate(-90deg)">2</div><div class="a" style="left:161px;top:311.5px;width:1px;height:1px;background:#9a9a9a"></div><div class="a" style="left:159px;top:318.8px;width:5px;height:1px;background:#aaa"></div><div class="a" style="left:161px;top:326.0px;width:1px;height:1px;background:#9a9a9a"></div><div class="a" style="left:151.5px;top:327.2px;width:20px;height:13px;text-align:center;font-size:12px;line-height:13px;color:#333;transform:rotate(-90deg)">1</div><div class="a" style="left:161px;top:340.4px;width:1px;height:1px;background:#9a9a9a"></div><div class="a" style="left:159px;top:347.7px;width:5px;height:1px;background:#aaa"></div><div class="a" style="left:161px;top:354.9px;width:1px;height:1px;background:#9a9a9a"></div><div class="a" style="left:161px;top:369.3px;width:1px;height:1px;background:#9a9a9a"></div><div class="a" style="left:159px;top:376.6px;width:5px;height:1px;background:#aaa"></div><div class="a" style="left:161px;top:383.8px;width:1px;height:1px;background:#9a9a9a"></div><div class="a" style="left:151.5px;top:385.0px;width:20px;height:13px;text-align:center;font-size:12px;line-height:13px;color:#333;transform:rotate(-90deg)">1</div><div class="a" style="left:161px;top:398.2px;width:1px;height:1px;background:#9a9a9a"></div><div class="a" style="left:159px;top:405.4px;width:5px;height:1px;background:#aaa"></div><div class="a" style="left:161px;top:412.7px;width:1px;height:1px;background:#9a9a9a"></div><div class="a" style="left:151.5px;top:413.9px;width:20px;height:13px;text-align:center;font-size:12px;line-height:13px;color:#333;transform:rotate(-90deg)">2</div><div class="a" style="left:161px;top:427.1px;width:1px;height:1px;background:#9a9a9a"></div><div class="a" style="left:159px;top:434.4px;width:5px;height:1px;background:#aaa"></div><div class="a" style="left:161px;top:441.6px;width:1px;height:1px;background:#9a9a9a"></div><div class="a" style="left:151.5px;top:442.8px;width:20px;height:13px;text-align:center;font-size:12px;line-height:13px;color:#333;transform:rotate(-90deg)">3</div><div class="a" style="left:161px;top:456.0px;width:1px;height:1px;background:#9a9a9a"></div><div class="a" style="left:159px;top:463.2px;width:5px;height:1px;background:#aaa"></div><div class="a" style="left:161px;top:470.5px;width:1px;height:1px;background:#9a9a9a"></div><div class="a" style="left:151.5px;top:471.7px;width:20px;height:13px;text-align:center;font-size:12px;line-height:13px;color:#333;transform:rotate(-90deg)">4</div><div class="a" style="left:161px;top:484.9px;width:1px;height:1px;background:#9a9a9a"></div><div class="a" style="left:159px;top:492.2px;width:5px;height:1px;background:#aaa"></div><div class="a" style="left:161px;top:499.4px;width:1px;height:1px;background:#9a9a9a"></div><div class="a" style="left:151.5px;top:500.6px;width:20px;height:13px;text-align:center;font-size:12px;line-height:13px;color:#333;transform:rotate(-90deg)">5</div><div class="a" style="left:161px;top:513.8px;width:1px;height:1px;background:#9a9a9a"></div><div class="a" style="left:159px;top:521.1px;width:5px;height:1px;background:#aaa"></div><div class="a" style="left:161px;top:528.3px;width:1px;height:1px;background:#9a9a9a"></div><div class="a" style="left:151.5px;top:529.5px;width:20px;height:13px;text-align:center;font-size:12px;line-height:13px;color:#333;transform:rotate(-90deg)">6</div><div class="a" style="left:161px;top:542.7px;width:1px;height:1px;background:#9a9a9a"></div><div class="a" style="left:159px;top:550.0px;width:5px;height:1px;background:#aaa"></div><div class="a" style="left:161px;top:557.2px;width:1px;height:1px;background:#9a9a9a"></div><div class="a" style="left:151.5px;top:558.4px;width:20px;height:13px;text-align:center;font-size:12px;line-height:13px;color:#333;transform:rotate(-90deg)">7</div><div class="a" style="left:161px;top:571.6px;width:1px;height:1px;background:#9a9a9a"></div><div class="a" style="left:159px;top:578.9px;width:5px;height:1px;background:#aaa"></div><div class="a" style="left:161px;top:586.1px;width:1px;height:1px;background:#9a9a9a"></div><div class="a" style="left:151.5px;top:587.3px;width:20px;height:13px;text-align:center;font-size:12px;line-height:13px;color:#333;transform:rotate(-90deg)">8</div><div class="a" style="left:161px;top:600.5px;width:1px;height:1px;background:#9a9a9a"></div><div class="a" style="left:159px;top:607.8px;width:5px;height:1px;background:#aaa"></div><div class="a" style="left:161px;top:615.0px;width:1px;height:1px;background:#9a9a9a"></div><div class="a" style="left:151.5px;top:616.2px;width:20px;height:13px;text-align:center;font-size:12px;line-height:13px;color:#333;transform:rotate(-90deg)">9</div><div class="a" style="left:161px;top:629.4px;width:1px;height:1px;background:#9a9a9a"></div><div class="a" style="left:159px;top:636.7px;width:5px;height:1px;background:#aaa"></div><div class="a" style="left:161px;top:643.9px;width:1px;height:1px;background:#9a9a9a"></div><div class="a" style="left:151.5px;top:645.1px;width:20px;height:13px;text-align:center;font-size:12px;line-height:13px;color:#333;transform:rotate(-90deg)">10</div><div class="a" style="left:161px;top:658.3px;width:1px;height:1px;background:#9a9a9a"></div><div class="a" style="left:159px;top:665.6px;width:5px;height:1px;background:#aaa"></div><div class="a" style="left:161px;top:672.8px;width:1px;height:1px;background:#9a9a9a"></div><div class="a" style="left:151.5px;top:674.0px;width:20px;height:13px;text-align:center;font-size:12px;line-height:13px;color:#333;transform:rotate(-90deg)">11</div><div class="a" style="left:161px;top:687.2px;width:1px;height:1px;background:#9a9a9a"></div><div class="a" style="left:159px;top:694.5px;width:5px;height:1px;background:#aaa"></div><div class="a" style="left:161px;top:701.7px;width:1px;height:1px;background:#9a9a9a"></div><div class="a" style="left:151.5px;top:702.9px;width:20px;height:13px;text-align:center;font-size:12px;line-height:13px;color:#333;transform:rotate(-90deg)">12</div><div class="a" style="left:161px;top:716.1px;width:1px;height:1px;background:#9a9a9a"></div><div class="a" style="left:159px;top:723.4px;width:5px;height:1px;background:#aaa"></div><div class="a" style="left:161px;top:730.6px;width:1px;height:1px;background:#9a9a9a"></div><div class="a" style="left:151.5px;top:731.8px;width:20px;height:13px;text-align:center;font-size:12px;line-height:13px;color:#333;transform:rotate(-90deg)">13</div><div class="a" style="left:161px;top:745.0px;width:1px;height:1px;background:#9a9a9a"></div><div class="a" style="left:159px;top:752.2px;width:5px;height:1px;background:#aaa"></div><div class="a" style="left:161px;top:759.5px;width:1px;height:1px;background:#9a9a9a"></div><div class="a" style="left:151.5px;top:760.7px;width:20px;height:13px;text-align:center;font-size:12px;line-height:13px;color:#333;transform:rotate(-90deg)">14</div><div class="a" style="left:161px;top:773.9px;width:1px;height:1px;background:#9a9a9a"></div><div class="a" style="left:159px;top:781.2px;width:5px;height:1px;background:#aaa"></div><div class="a" style="left:161px;top:788.4px;width:1px;height:1px;background:#9a9a9a"></div><div class="a" style="left:151.5px;top:789.6px;width:20px;height:13px;text-align:center;font-size:12px;line-height:13px;color:#333;transform:rotate(-90deg)">15</div><div class="a" style="left:161px;top:802.8px;width:1px;height:1px;background:#9a9a9a"></div><div class="a" style="left:159px;top:810.1px;width:5px;height:1px;background:#aaa"></div><div class="a" style="left:161px;top:817.3px;width:1px;height:1px;background:#9a9a9a"></div><div class="a" style="left:151.5px;top:818.5px;width:20px;height:13px;text-align:center;font-size:12px;line-height:13px;color:#333;transform:rotate(-90deg)">16</div><div class="a" style="left:161px;top:831.7px;width:1px;height:1px;background:#9a9a9a"></div>
<div class="a" style="left:325px;top:212px;width:468px;height:37px;border:2.5px solid #b0323c"></div>
<div class="a" style="left:267px;top:258px;width:585px;height:585px;background:#fff;border:1px solid #c4c4c4;overflow:hidden"><div class="a" style="left:45px;top:-60px;width:320px;height:150px;border-radius:50%;background:radial-gradient(closest-side,rgba(215,248,252,.8),rgba(255,255,255,0))"></div><div class="a" style="left:30px;top:430px;width:290px;height:300px;border-radius:50%;background:radial-gradient(closest-side,rgba(215,247,252,.7),rgba(255,255,255,0))"></div><div class="a" style="left:-60px;top:260px;width:110px;height:380px;border-radius:50%;background:radial-gradient(closest-side,rgba(242,238,255,.8),rgba(255,255,255,0))"></div><div class="a" style="left:520px;top:20px;width:130px;height:340px;border-radius:50%;background:radial-gradient(closest-side,rgba(252,252,235,.85),rgba(255,255,255,0))"></div></div>
<div class="a" style="left:330px;top:286px;width:459px;height:57px;border-radius:5px;background:linear-gradient(90deg,#1cc3f9 0%,#1ab2f6 40%,#1a8ff1 100%);box-shadow:0 3px 6px rgba(0,0,0,.12)"></div>
<div class="a" style="left:446px;top:296.8px;font-size:29px;line-height:32px;color:#e6fbff;-webkit-text-stroke:0.8px #e6fbff;letter-spacing:0">自律</div>
<div class="a" style="left:531.5px;top:296.8px;font-size:29px;line-height:32px;color:#e6fbff;-webkit-text-stroke:0.8px #e6fbff">的</div>
<div class="a" style="left:614.5px;top:296.8px;font-size:29px;line-height:32px;color:#e6fbff;-webkit-text-stroke:0.8px #e6fbff">音律</div>
<div class="a" style="left:330px;top:350px;width:459px;height:58px;background:linear-gradient(90deg,#1cb6ec 0%,#1aa6ea 40%,#1a82e6 100%);box-shadow:0 14px 18px -6px rgba(0,0,0,.17)"></div>
<div class="a" style="left:431.5px;top:363px;font-size:29px;line-height:32px;color:#e6fbff;-webkit-text-stroke:0.8px #e6fbff">自律</div>
<div class="a" style="left:577px;top:363px;font-size:29px;line-height:32px;color:#e6fbff;-webkit-text-stroke:0.8px #e6fbff">的</div>
<div class="a" style="left:628.5px;top:363px;font-size:29px;line-height:32px;color:#e6fbff;-webkit-text-stroke:0.8px #e6fbff">音律</div>
<svg style="left:330px;top:350px" width="459" height="58" viewBox="0 0 459 58"><rect x="0.5" y="0.5" width="458" height="57" fill="none" stroke="#fff" stroke-width="1.2"/><rect x="0.5" y="0.5" width="458" height="57" fill="none" stroke="#9a9a9a" stroke-width="1.2" stroke-dasharray="1 1.2"/></svg>
<div class="a" style="left:559px;top:326px;width:1px;height:20px;background:rgba(140,150,160,.45)"></div>
<svg style="left:550px;top:307px" width="20" height="20" viewBox="0 0 20 20"><path d="M15.88 11.21A6.6 6.6 0 1 0 10.65 16.00" fill="none" stroke="#707070" stroke-width="3.1"/><path d="M13.68 10.01L15.88 12.41L18.08 10.01" fill="none" stroke="#707070" stroke-width="3.1" stroke-linecap="round"/><path d="M15.88 11.21A6.6 6.6 0 1 0 10.65 16.00" fill="none" stroke="#fff" stroke-width="1.6"/><path d="M13.68 10.01L15.88 12.41L18.08 10.01" fill="none" stroke="#fff" stroke-width="1.6" stroke-linecap="round"/></svg>
<svg style="left:324px;top:344px" width="12" height="12" viewBox="0 0 12 12"><circle cx="6" cy="6" r="4.5" fill="#fff" stroke="#888" stroke-width="1.9"/></svg>
<svg style="left:553.5px;top:344px" width="12" height="12" viewBox="0 0 12 12"><circle cx="6" cy="6" r="4.5" fill="#fff" stroke="#888" stroke-width="1.9"/></svg>
<svg style="left:783px;top:344px" width="12" height="12" viewBox="0 0 12 12"><circle cx="6" cy="6" r="4.5" fill="#fff" stroke="#888" stroke-width="1.9"/></svg>
<svg style="left:324px;top:373px" width="12" height="12" viewBox="0 0 12 12"><circle cx="6" cy="6" r="4.5" fill="#fff" stroke="#888" stroke-width="1.9"/></svg>
<svg style="left:783px;top:373px" width="12" height="12" viewBox="0 0 12 12"><circle cx="6" cy="6" r="4.5" fill="#fff" stroke="#888" stroke-width="1.9"/></svg>
<svg style="left:324px;top:402px" width="12" height="12" viewBox="0 0 12 12"><circle cx="6" cy="6" r="4.5" fill="#fff" stroke="#888" stroke-width="1.9"/></svg>
<svg style="left:553.5px;top:402px" width="12" height="12" viewBox="0 0 12 12"><circle cx="6" cy="6" r="4.5" fill="#fff" stroke="#888" stroke-width="1.9"/></svg>
<svg style="left:783px;top:402px" width="12" height="12" viewBox="0 0 12 12"><circle cx="6" cy="6" r="4.5" fill="#fff" stroke="#888" stroke-width="1.9"/></svg>
<svg style="left:331px;top:346px" width="10" height="10" viewBox="0 0 10 10"><circle cx="5" cy="5" r="4.4" fill="#eba23a"/></svg>
<div class="a" style="left:0;top:860px;width:960px;height:26px;background:#f5f5f5;border-top:1px solid #d2d2d2"></div>
<div class="a" style="left:8px;top:867px;font-size:12px;letter-spacing:0.45px;line-height:16px;color:#333">幻灯片 第 1 张，共 1 张</div>
<div class="a" style="left:156px;top:867px;font-size:12px;letter-spacing:0.45px;line-height:16px;color:#333">“公众号：自律的音律”</div>
<svg style="left:295px;top:867px" width="14" height="14" viewBox="0 0 14 14"><path d="M1 1.5C3 1 5.5 1.5 7 3C8.5 1.5 11 1 13 1.5V11C11 10.5 8.5 11 7 12.5C5.5 11 3 10.5 1 11Z" fill="none" stroke="#333" stroke-width="1.1"/><path d="M7 3V12.5" stroke="#333" stroke-width="1"/></svg>
<svg style="left:517px;top:865px" width="17" height="18" viewBox="0 0 17 18"><path d="M4.5 3L7 0.8L9.5 3" fill="none" stroke="#333" stroke-width="1"/><path d="M0.5 10.5H16.5M0.5 13.5H16.5M0.5 16.5H16.5" stroke="#333" stroke-width="1"/></svg>
<div class="a" style="left:536px;top:866px;font-size:12px;line-height:14px;color:#333">备注</div>
<div class="a" style="left:580px;top:864px;width:39px;height:22px;background:#dcdcdc"></div>
<svg style="left:592px;top:867px" width="15" height="13" viewBox="0 0 15 13"><rect x="0.5" y="0.5" width="14" height="12" fill="none" stroke="#333" stroke-width="1.1"/><path d="M3 0.5V12.5" stroke="#333" stroke-width="1"/><rect x="5.5" y="3" width="6" height="5" fill="none" stroke="#333" stroke-width="1"/></svg>
<svg style="left:632px;top:867px" width="15" height="13" viewBox="0 0 15 13"><rect x="0.5" y="0.5" width="5.5" height="4.5" fill="none" stroke="#333" stroke-width="1.1"/><rect x="8.5" y="0.5" width="5.5" height="4.5" fill="none" stroke="#333" stroke-width="1.1"/><rect x="0.5" y="7.5" width="5.5" height="4.5" fill="none" stroke="#333" stroke-width="1.1"/><rect x="8.5" y="7.5" width="5.5" height="4.5" fill="none" stroke="#333" stroke-width="1.1"/></svg>
<svg style="left:672px;top:867px" width="14" height="13" viewBox="0 0 14 13"><path d="M0.5 0.5H6C6.5 0.5 7 1 7 1.5C7 1 7.5 0.5 8 0.5H13.5V12.5H8L7 13L6 12.5H0.5Z" fill="none" stroke="#333" stroke-width="1.1"/><path d="M7 1.5V12.5M2.5 3.5H5M2.5 6H5M2.5 8.5H5M9 3.5H11.5M9 6H11.5M9 8.5H11.5" stroke="#333" stroke-width="0.9"/></svg>
<svg style="left:712px;top:867px" width="13" height="14" viewBox="0 0 13 14"><path d="M0.5 0.5H12.5M0.5 0.5V8H12.5V0.5M6.5 8V13.5M3.5 13.5H9.5" fill="none" stroke="#333" stroke-width="1.1"/><rect x="3" y="3" width="7" height="2.5" fill="none" stroke="#333" stroke-width="0.9"/></svg>
<div class="a" style="left:745px;top:873px;width:7px;height:1px;background:#444"></div>
<div class="a" style="left:759px;top:874px;width:100px;height:1px;background:#777"></div>
<div class="a" style="left:808px;top:871px;width:1px;height:6px;background:#777"></div>
<div class="a" style="left:794px;top:869px;width:6px;height:11px;background:#505050"></div>
<svg style="left:863px;top:870px" width="8" height="8" viewBox="0 0 8 8"><path d="M4 0V8M0 4H8" stroke="#444" stroke-width="1"/></svg>
<div class="a" style="left:884px;top:867px;font-size:12.3px;line-height:14px;color:#333">78%</div>
<svg style="left:927px;top:866px" width="16" height="15" viewBox="0 0 16 15"><path d="M6 3L8 1L10 3M6 12L8 14L10 12M3 5.5L1 7.5L3 9.5M13 5.5L15 7.5L13 9.5" fill="none" stroke="#333" stroke-width="1"/><rect x="4.5" y="4.5" width="7" height="6" fill="none" stroke="#333" stroke-width="1.1"/></svg>
<div class="a" style="left:738px;top:836px;font-size:24px;line-height:28px;color:#000;-webkit-text-stroke:1px #000">头条 @自律的音律</div>
<div class="a" style="left:736.8px;top:834.6px;font-size:24px;line-height:28px;color:rgba(255,255,255,.9)">头条 @自律的音律</div>
<div class="a" style="left:0;top:0;width:960px;height:886px;border-style:solid;border-color:#6e4c3c;border-width:1px 1px 1px 1px"></div>
<div class="a" style="left:1px;top:1px;width:958px;height:884px;border-style:solid;border-color:#fbe6da;border-width:1px 3px 2px 1px"></div>
</body></html>
